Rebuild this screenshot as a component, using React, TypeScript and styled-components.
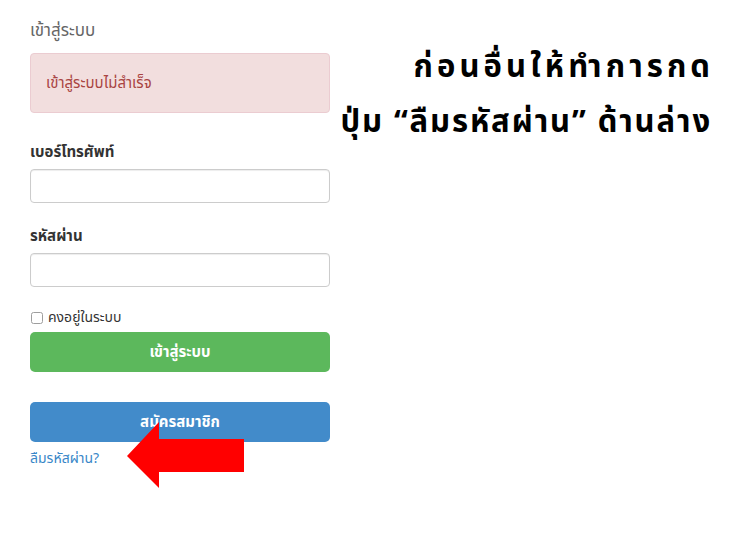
import styled, { createGlobalStyle } from 'styled-components';

const GlobalStyle = createGlobalStyle`
  body {
    margin: 0;
    background: #ffffff;
    font-family: "Noto Sans Thai", "Noto Sans", "DejaVu Sans", sans-serif;
  }
`;

function App() {
  return (
    <Page>
      <GlobalStyle />
      <FormColumn>
        <Title>เข้าสู่ระบบ</Title>
        <Alert>เข้าสู่ระบบไม่สำเร็จ</Alert>
        <Label>เบอร์โทรศัพท์</Label>
        <Input type="text" />
        <Label>รหัสผ่าน</Label>
        <Input type="password" />
        <CheckRow>
          <Check type="checkbox" />
          <span>คงอยู่ในระบบ</span>
        </CheckRow>
        <Button $color="#5cb85c">เข้าสู่ระบบ</Button>
        <Button $color="#428bca" $gap={30}>
          สมัครสมาชิก
        </Button>
        <LinkRow>
          <ForgotLink href="#">ลืมรหัสผ่าน?</ForgotLink>
          <Arrow width="118" height="66" viewBox="0 0 118 66">
            <polygon points="0,34 32,0 32,17 117,17 117,50 32,50 32,66" fill="#ff0000" />
          </Arrow>
        </LinkRow>
      </FormColumn>
      <Note>
        <NoteLine $spacing={4.1}>ก่อนอื่นให้ทำการกด</NoteLine>
        <NoteLine $spacing={1.9}>ปุ่ม “ลืมรหัสผ่าน” ด้านล่าง</NoteLine>
      </Note>
    </Page>
  );
}

export default App;

const Page = styled.div`
  display: flex;
  flex-direction: row;
  width: 737px;
  height: 547px;
  box-sizing: border-box;
  padding: 18px 25px 0 30px;
`;

const FormColumn = styled.div`
  display: flex;
  flex-direction: column;
  width: 300px;
`;

const Title = styled.div`
  font-size: 17px;
  color: #666;
  line-height: 26px;
`;

const Alert = styled.div`
  margin-top: 9px;
  margin-bottom: 6px;
  height: 60px;
  box-sizing: border-box;
  display: flex;
  align-items: center;
  padding: 0 15px;
  background: #f2dede;
  border: 1px solid #ebccd1;
  border-radius: 4px;
  color: #a94442;
  font-size: 15px;
`;

const Label = styled.div`
  margin-top: 23px;
  margin-bottom: 5px;
  font-size: 15px;
  font-weight: bold;
  color: #333;
  line-height: 22px;
`;

const Input = styled.input`
  height: 34px;
  box-sizing: border-box;
  border: 1px solid #ccc;
  border-radius: 4px;
  box-shadow: inset 0 1px 1px rgba(0, 0, 0, 0.075);
  padding: 6px 12px;
`;

const CheckRow = styled.label`
  display: flex;
  align-items: center;
  gap: 5px;
  margin-top: 20px;
  font-size: 14px;
  color: #333;
  line-height: 22px;
`;

const Check = styled.input`
  margin: 0 0 0 1px;
  width: 12px;
  height: 12px;
  opacity: 0.7;
`;

const Button = styled.div<{ $color: string; $gap?: number }>`
  margin-top: ${(p) => p.$gap ?? 3}px;
  height: 40px;
  display: flex;
  align-items: center;
  justify-content: center;
  background: ${(p) => p.$color};
  border-radius: 5px;
  color: #fff;
  font-weight: bold;
  font-size: 15px;
`;

const LinkRow = styled.div`
  position: relative;
  margin-top: 5px;
  line-height: 22px;
`;

const ForgotLink = styled.a`
  color: #3a87c8;
  font-size: 14px;
  text-decoration: none;
`;

const Arrow = styled.svg`
  position: absolute;
  left: 97px;
  top: -25px;
`;

const Note = styled.div`
  flex: 1;
  display: flex;
  flex-direction: column;
  align-items: flex-end;
  padding-top: 22px;
`;

const NoteLine = styled.div<{ $spacing: number }>`
  font-size: 31px;
  font-weight: bold;
  color: #000;
  letter-spacing: ${(p) => p.$spacing}px;
  line-height: 55px;
  margin-right: -${(p) => p.$spacing - 2}px;
`;
